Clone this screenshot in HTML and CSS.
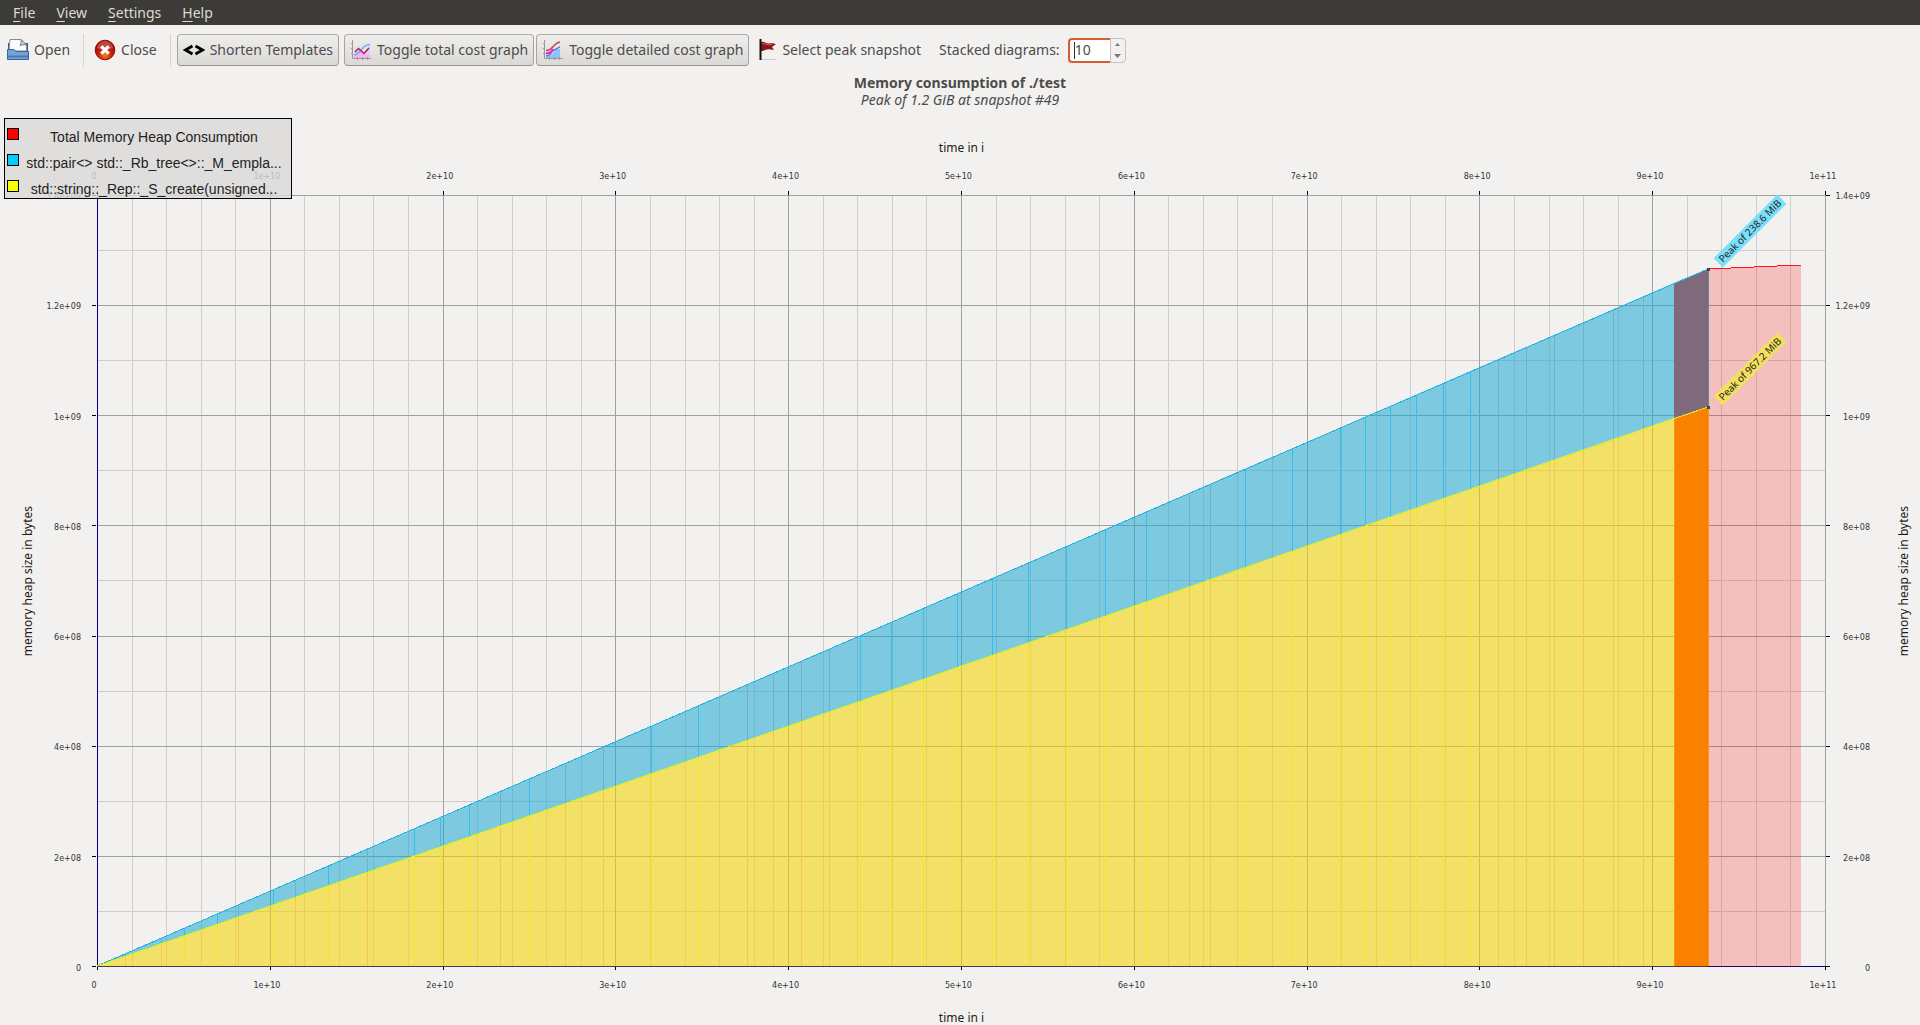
FILE: index.html
```html
<!DOCTYPE html>
<html lang="en">
<head>
<meta charset="utf-8">
<title>Memory consumption of ./test</title>
<link rel="stylesheet" href="styles.css">
</head>
<body>
<nav class="menubar">
  <button class="menu" type="button"><u>F</u>ile</button>
  <button class="menu" type="button"><u>V</u>iew</button>
  <button class="menu" type="button"><u>S</u>ettings</button>
  <button class="menu" type="button"><u>H</u>elp</button>
</nav>

<div class="toolbar">
  <button class="tool tool-open" type="button">
    <svg class="icon" width="22" height="22" viewBox="0 0 22 22">
      <path d="M1 4H21V14H1Z" fill="#2f5f9e"/>
      <path d="M3 .5H14L19.500 6V12H2Z" fill="#fafafa" stroke="#8c8c8c"/>
      <path d="M14 .5C14.500 3 14 5 13 6.500C15 5.500 17 5.500 19.500 6Z" fill="#d8d8d8" stroke="#777"/>
      <path d="M.5 10.500H7L9 12.500H21.500V20.500H.5Z" fill="#76a1d2" stroke="#3a6498"/>
      <path d="M1 17.500H21" stroke="#4a79b2" stroke-width="2"/>
    </svg>
    <span>Open</span>
  </button>
  <span class="divider"></span>
  <button class="tool tool-close" type="button">
    <svg class="icon" width="22" height="22" viewBox="0 0 22 22">
      <defs><radialGradient id="closeFill" cx=".5" cy=".75" r=".6"><stop offset="0" stop-color="#f08a1a"/><stop offset=".55" stop-color="#c4240c"/><stop offset="1" stop-color="#a80606"/></radialGradient></defs>
      <circle cx="11" cy="11" r="9.800" fill="url(#closeFill)" stroke="#9c0808"/>
      <path d="M3 9C4 4 8 2 11 2S18 4 19 9C14 11 8 11 3 9Z" fill="#fff" opacity=".25"/>
      <path d="M7.300 7.300L14.700 14.700M14.700 7.300L7.300 14.700" stroke="#fff" stroke-width="3.200"/>
    </svg>
    <span>Close</span>
  </button>
  <span class="divider"></span>
  <button class="tool checked" type="button" aria-pressed="true">
    <svg class="icon" width="22" height="22" viewBox="0 0 22 22">
      <path d="M9.500 7L2.500 11L9.500 15M12.500 7L19.500 11L12.500 15" fill="none" stroke="#000" stroke-width="2.800"/>
    </svg>
    <span>Shorten Templates</span>
  </button>
  <button class="tool checked total-toggle" type="button" aria-pressed="true">
    <svg class="icon" width="22" height="22" viewBox="0 0 22 22">
      <path d="M4 15L9 10L14 14L20 6V19H4Z" fill="#bfe0fb"/>
      <path d="M4 17C7 12 10 12 12 14S17 15 20 15V19H4Z" fill="#ffb0e8"/>
      <path d="M2.500 1V19.500H21M1 4.500H3M1 9.500H3M1 14.500H3M7.500 18V21M12.500 18V21M17.500 18V21" fill="none" stroke="#999"/>
      <path d="M4 16C10 16 12 5 20 5.500" fill="none" stroke="#6aa8ff" stroke-width="1.500"/>
      <path d="M5 13L8.500 9.500L14 14.500L19 9" fill="none" stroke="#c4145c" stroke-width="1.500"/>
    </svg>
    <span>Toggle total cost graph</span>
  </button>
  <button class="tool checked detailed-toggle" type="button" aria-pressed="true">
    <svg class="icon" width="22" height="22" viewBox="0 0 22 22">
      <path d="M4 18C8 15 10 17 12 13S16 10 18 10V19H4Z" fill="#8ec4fb"/>
      <path d="M2.500 1V19.500H21M1 4.500H3M1 9.500H3M1 14.500H3M7.500 18V21M12.500 18V21M17.500 18V21" fill="none" stroke="#999"/>
      <path d="M4 17C9 17 9 12 12 11S15 9 18 8" fill="none" stroke="#5878f0" stroke-width="1.500"/>
      <path d="M4 14.500C9 14 9 13 11 10" fill="none" stroke="#f020d0" stroke-width="2"/>
      <path d="M4 11.500C11 12 11 4 18 3" fill="none" stroke="#c04848" stroke-width="1.500"/>
    </svg>
    <span>Toggle detailed cost graph</span>
  </button>
  <button class="tool peak" type="button">
    <svg class="icon" width="18" height="22" viewBox="0 0 18 22">
      <path d="M2 20.500H17" stroke="#c9c8c6"/>
      <path d="M2 3C6 2 7 5 10 4.500S14 4 17 5L13 8L15 11C11 10 8 10 6 11S3 12 2 12Z" fill="#8e1515"/>
      <path d="M3 4.500C7 4 8 7 13 5.500" fill="none" stroke="#c86060"/>
      <path d="M1.500 0V21" stroke="#111" stroke-width="2"/>
    </svg>
    <span>Select peak snapshot</span>
  </button>
  <label class="stacked" for="stacked">Stacked diagrams:</label>
  <div class="spin">
    <input id="stacked" type="number" value="10">
    <div class="steps">
      <button type="button" aria-label="Increase"><svg width="5" height="3" viewBox="0 0 5 3"><path d="M0 3L2.500 0L5 3Z" fill="#777"/></svg></button>
      <button type="button" aria-label="Decrease"><svg width="7" height="4" viewBox="0 0 7 4"><path d="M0 0H7L3.500 4Z" fill="#777"/></svg></button>
    </div>
  </div>
</div>

<main class="view">
  <h1 class="title">Memory consumption of ./test</h1>
  <p class="subtitle">Peak of 1.2 GiB at snapshot #49</p>

  <div class="chart">
    <div class="axis-title top">time in i</div>
    <div class="xticks xtop"><span>0</span><span>1e+10</span><span>2e+10</span><span>3e+10</span><span>4e+10</span><span>5e+10</span><span>6e+10</span><span>7e+10</span><span>8e+10</span><span>9e+10</span><span>1e+11</span></div>
    <div class="axis-title side left"><span>memory heap size in bytes</span></div>
    <div class="yticks yleft"><span>1.4e+09</span><span>1.2e+09</span><span>1e+09</span><span>8e+08</span><span>6e+08</span><span>4e+08</span><span>2e+08</span><span>0</span></div>

    <div class="plot">
      <svg class="canvas" viewBox="0 0 1729 772" preserveAspectRatio="none" role="img" aria-label="Heap size over time">
        <defs>
          <clipPath id="upper"><path d="M0 771L1577 89V223L0 771Z"/></clipPath>
          <clipPath id="lower"><path d="M0 771L1611 212V771Z"/></clipPath>
        </defs>
        <path class="minor" d="M35.500 0V771M69.500 0V771M104.500 0V771M138.500 0V771M207.500 0V771M242.500 0V771M276.500 0V771M311.500 0V771M380.500 0V771M415.500 0V771M449.500 0V771M484.500 0V771M553.500 0V771M588.500 0V771M622.500 0V771M657.500 0V771M726.500 0V771M760.500 0V771M795.500 0V771M829.500 0V771M899.500 0V771M933.500 0V771M968.500 0V771M1002.500 0V771M1071.500 0V771M1106.500 0V771M1140.500 0V771M1175.500 0V771M1244.500 0V771M1279.500 0V771M1313.500 0V771M1348.500 0V771M1417.500 0V771M1452.500 0V771M1486.500 0V771M1521.500 0V771M1590.500 0V771M1624.500 0V771M1659.500 0V771M1693.500 0V771"/>
        <path class="minor" d="M0 55.500H1728M0 165.500H1728M0 275.500H1728M0 385.500H1728M0 496.500H1728M0 606.500H1728M0 716.500H1728"/>
        <path class="major" d="M173.500 0V771M346.500 0V771M518.500 0V771M691.500 0V771M864.500 0V771M1037.500 0V771M1210.500 0V771M1382.500 0V771M1555.500 0V771M1728.500 0V771M0 .5H1728M0 110.500H1728M0 220.500H1728M0 330.500H1728M0 441.500H1728M0 551.500H1728M0 661.500H1728"/>
        <path class="axis" d="M.5 0V771.500H1729"/>

        <path class="total" d="M1611 74L1704 70V772H1611Z"/>
        <path class="blue" d="M0 771L1577 88V223L0 771Z"/>
        <path class="yellow" d="M0 771L1577 223V772H0Z"/>
        <path class="blue-selected" d="M1577 88L1611 74V212L1577 223Z"/>
        <path class="yellow-selected" d="M1577 223L1611 212V771H1577Z"/>

        <path class="seam gray" clip-path="url(#upper)" d="M28.500 0V771M64.500 0V771M141.500 0V771M198.500 0V771M270.500 0V771M403.500 0V771M468.500 0V771M506.500 0V771M650.500 0V771M676.500 0V771M704.500 0V771M732.500 0V771M1092.500 0V771M1113.500 0V771M1401.500 0V771M1429.500 0V771M1457.500 0V771M1486.500 0V771M1516.500 0V771M1546.500 0V771"/>
        <path class="seam orange" clip-path="url(#lower)" d="M28.500 0V771M64.500 0V771M141.500 0V771M198.500 0V771M270.500 0V771M403.500 0V771M468.500 0V771M506.500 0V771M650.500 0V771M676.500 0V771M704.500 0V771M732.500 0V771M1092.500 0V771M1113.500 0V771M1401.500 0V771M1429.500 0V771M1457.500 0V771M1486.500 0V771M1516.500 0V771M1546.500 0V771"/>
        <path class="seam cyan" clip-path="url(#upper)" d="M87.500 0V771M120.500 0V771M176.500 0V771M231.500 0V771M317.500 0V771M343.500 0V771M372.500 0V771M432.500 0V771M554.500 0V771M601.500 0V771M763.500 0V771M794.500 0V771M826.500 0V771M860.500 0V771M895.500 0V771M931.500 0V771M969.500 0V771M1008.500 0V771M1049.500 0V771M1148.500 0V771M1195.500 0V771M1243.500 0V771M1268.500 0V771M1293.500 0V771M1319.500 0V771M1346.500 0V771M1373.500 0V771"/>
        <path class="seam lemon" clip-path="url(#lower)" d="M87.500 0V771M120.500 0V771M176.500 0V771M231.500 0V771M317.500 0V771M343.500 0V771M372.500 0V771M432.500 0V771M554.500 0V771M601.500 0V771M763.500 0V771M794.500 0V771M826.500 0V771M860.500 0V771M895.500 0V771M931.500 0V771M969.500 0V771M1008.500 0V771M1049.500 0V771M1148.500 0V771M1195.500 0V771M1243.500 0V771M1268.500 0V771M1293.500 0V771M1319.500 0V771M1346.500 0V771M1373.500 0V771"/>

        <path class="edge edge-blue" d="M1611.500 74V212"/>
        <path class="edge edge-orange" d="M1577.500 223V771M1611.500 212V771"/>
        <path class="line line-total" d="M1611 74L1704 70"/>
        <path class="line line-blue" d="M0 771L1611 74"/>
        <path class="line line-yellow" d="M0 771L1611 212"/>
        <path class="axis-over" d="M0 771.500H1611"/>
        <path class="marker" d="M1610 73h3v3h-3zM1610 211h3v3h-3z"/>
        <path class="tick" d="M.5-4V0M173.500-4V0M346.500-4V0M518.500-4V0M691.500-4V0M864.500-4V0M1037.500-4V0M1210.500-4V0M1382.500-4V0M1555.500-4V0M1728.500-4V0M.5 772V775M173.500 772V775M346.500 772V775M518.500 772V775M691.500 772V775M864.500 772V775M1037.500 772V775M1210.500 772V775M1382.500 772V775M1555.500 772V775M1728.500 772V775M-5 .5H-1M-5 110.500H-1M-5 220.500H-1M-5 330.500H-1M-5 441.500H-1M-5 551.500H-1M-5 661.500H-1M-5 771.500H-1M1729 .5H1733M1729 110.500H1733M1729 220.500H1733M1729 330.500H1733M1729 441.500H1733M1729 551.500H1733M1729 661.500H1733M1729 771.500H1733"/>
      </svg>
      <span class="peak-label peak-blue">Peak of 238.6 MiB</span>
      <span class="peak-label peak-yellow">Peak of 967.2 MiB</span>
    </div>

    <div class="yticks yright"><span>1.4e+09</span><span>1.2e+09</span><span>1e+09</span><span>8e+08</span><span>6e+08</span><span>4e+08</span><span>2e+08</span><span>0</span></div>
    <div class="axis-title side right"><span>memory heap size in bytes</span></div>
    <div class="xticks xbottom"><span>0</span><span>1e+10</span><span>2e+10</span><span>3e+10</span><span>4e+10</span><span>5e+10</span><span>6e+10</span><span>7e+10</span><span>8e+10</span><span>9e+10</span><span>1e+11</span></div>
    <div class="axis-title bottom">time in i</div>
  </div>

  <ul class="legend">
    <li><i class="swatch red"></i><span>Total Memory Heap Consumption</span></li>
    <li><i class="swatch sky"></i><span>std::pair&lt;&gt; std::_Rb_tree&lt;&gt;::_M_empla...</span></li>
    <li><i class="swatch lime"></i><span>std::string::_Rep::_S_create(unsigned...</span></li>
  </ul>
</main>
</body>
</html>
```
FILE: styles.css
```css
* { box-sizing: border-box; }

body {
  margin: 0;
  min-height: 100vh;
  display: flex;
  flex-direction: column;
  background: #f2f1ef;
  color: #4c4c4c;
  font: 14px/18px "Noto Sans", "Open Sans", sans-serif;
  overflow: hidden;
}

button, input { font: inherit; color: inherit; }

.menubar {
  display: flex;
  gap: 21px;
  height: 25px;
  padding: 0 13px;
  background: #3c3b37;
  color: #dfdbd2;
}
.menu {
  padding: 0;
  border: 0;
  background: none;
}
.menu u { text-underline-offset: 3px; }

.toolbar {
  display: flex;
  align-items: center;
  height: 50px;
  padding: 0 6px;
}
.tool {
  display: flex;
  align-items: center;
  gap: 5px;
  height: 32px;
  padding: 0;
  border: 1px solid transparent;
  border-radius: 4px;
  background: none;
  white-space: nowrap;
}
.icon { flex: none; }
.divider {
  flex: none;
  width: 1px;
  height: 33px;
  margin: 0 9px 0 12px;
  background: #d6d5d2;
}
.checked {
  padding: 0 5px;
  border-color: #b0aeaa #a5a39f #979591;
  background: linear-gradient(#efeeec, #dbd9d6);
}
.divider + .checked { margin-left: -3px; }
.total-toggle { margin-left: 5px; }
.detailed-toggle { margin-left: 2px; }
.peak { margin-left: 9px; }
.stacked { margin-left: 17px; }
.spin {
  display: flex;
  width: 58px;
  height: 25px;
  margin-left: 8px;
}
.spin input {
  width: 42px;
  padding: 0 0 0 5px;
  border: 2px solid #d95b34;
  border-right: 0;
  border-radius: 4px 0 0 4px;
  background: linear-gradient(#333, #333) 4px 2px / 1px 17px no-repeat #fff;
  outline: 0;
  appearance: textfield;
}
.spin input::-webkit-inner-spin-button { appearance: none; }
.steps {
  flex: 1;
  display: flex;
  flex-direction: column;
  border: 1px solid #c4c2be;
  border-radius: 0 4px 4px 0;
}
.steps button {
  flex: 1;
  display: flex;
  align-items: center;
  justify-content: center;
  padding: 0;
  border: 0;
  background: none;
}

.view {
  position: relative;
  flex: 1;
  display: flex;
  flex-direction: column;
}
.title, .subtitle {
  margin: 0;
  font-size: 14px;
  line-height: 17px;
  text-align: center;
}
.title { line-height: 16px; }
.subtitle { font-style: italic; }

.chart {
  flex: 1;
  display: grid;
  grid-template-columns: 56px 41px 1fr 62px 32px;
  grid-template-rows: 20px 37px 1fr 38px 20px;
  padding-top: 30px;
  color: #333;
  font-size: 12px;
}
.axis-title {
  display: flex;
  align-items: center;
  justify-content: center;
  line-height: 14px;
  white-space: nowrap;
  color: #1c1c1c;
}
.top { grid-area: 1 / 3; }
.bottom { grid-area: 5 / 3; align-items: flex-end; }
.side span { writing-mode: vertical-rl; transform: rotate(180deg); }
.left { grid-area: 3 / 1; }
.right { grid-area: 3 / 5; }

.xticks, .yticks {
  display: flex;
  justify-content: space-between;
  font: 8px/10px "DejaVu Sans", sans-serif;
}
.xticks {
  align-items: center;
  margin: 0 -17px 0 -23px;
}
.xticks span { width: 40px; text-align: center; }
.xtop { grid-area: 2 / 3; }
.xbottom { grid-area: 4 / 3; }
.yticks {
  flex-direction: column;
  align-items: flex-end;
  margin: -3px 0 -7px;
}
.yleft { grid-area: 3 / 2; padding-right: 16px; }
.yright { grid-area: 3 / 4; padding-right: 18px; }

.plot {
  grid-area: 3 / 3;
  position: relative;
  min-height: 0;
}
.canvas {
  position: absolute;
  inset: 0;
  width: 100%;
  height: 100%;
  overflow: visible;
}
.canvas path { fill: none; vector-effect: non-scaling-stroke; }
.minor { stroke: #cfcecc; shape-rendering: crispEdges; }
.major { stroke: #a0a09e; shape-rendering: crispEdges; }
.axis { stroke: #000080; shape-rendering: crispEdges; }
.axis-over { stroke: #463a52; shape-rendering: crispEdges; }
.tick { stroke: #000; shape-rendering: crispEdges; }
.canvas .total { fill: rgba(255, 0, 0, .2); }
.canvas .blue { fill: rgba(27, 167, 211, .55); }
.canvas .yellow { fill: rgba(244, 211, 0, .57); }
.canvas .blue-selected { fill: #80687d; }
.canvas .yellow-selected { fill: #fa8000; }
.canvas .marker { fill: #444; }
.seam, .line { shape-rendering: crispEdges; }
.gray { stroke: #76aec6; }
.orange { stroke: #f4c64a; }
.cyan { stroke: #38bfe6; }
.lemon { stroke: #f1e72a; }
.edge-blue { stroke: #5b8ba3; }
.edge-orange { stroke: #ff9412; }
.line-total { stroke: #ff1414; }
.line-blue { stroke: #1fb4e2; }
.line-yellow { stroke: #d2f21c; }

.peak-label {
  position: absolute;
  left: 95.6%;
  width: 90px;
  font-size: 10px;
  line-height: 13px;
  text-align: center;
  white-space: nowrap;
  color: #222;
  transform: translate(-50%, -50%) rotate(-45deg);
}
.peak-blue { top: 4.7%; background: #7ae0fa; }
.peak-yellow { top: 22.5%; background: #f3e060; }

.legend {
  position: absolute;
  top: 43px;
  left: 4px;
  width: 288px;
  height: 81px;
  margin: 0;
  padding: 4px 2px 0;
  border: 1px solid #000;
  background: rgba(218, 218, 216, .8);
  color: #222;
  font: 14px/20px "Liberation Sans", Arial, sans-serif;
  list-style: none;
}
.legend li {
  display: flex;
  height: 26px;
  padding-top: 4px;
}
.legend span { flex: 1; text-align: center; white-space: nowrap; }
.swatch {
  width: 12px;
  height: 12px;
  margin-top: 1px;
  border: 1px solid #000;
}
.red { background: #f00; }
.sky { background: #00ccff; }
.lime { background: #f4ff00; }
```
